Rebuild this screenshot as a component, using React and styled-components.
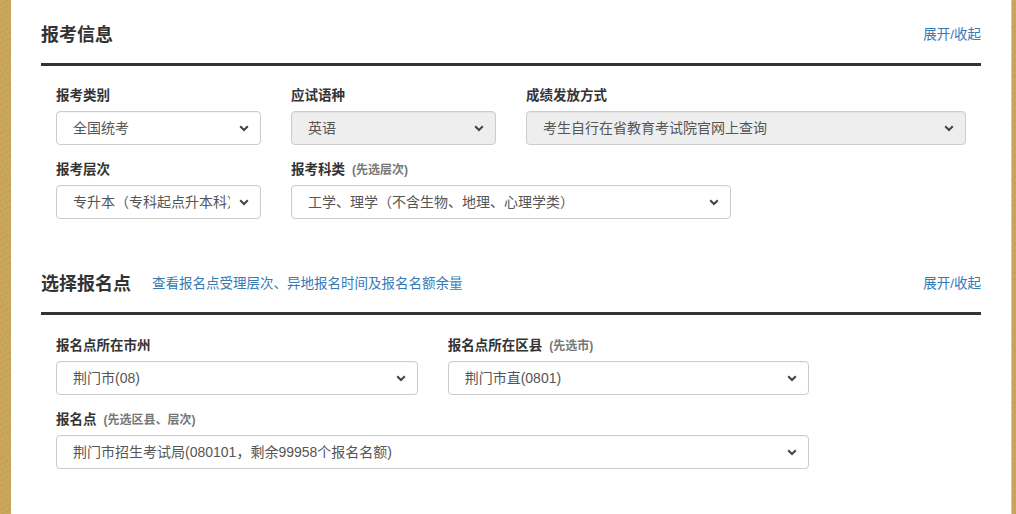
import React from "react";
import styled, { createGlobalStyle } from "styled-components";

const GlobalStyle = createGlobalStyle`
  html, body {
    margin: 0;
    padding: 0;
    height: 100%;
  }
  body {
    background-color: #c9a459;
    background-image:
      repeating-linear-gradient(63deg, rgba(255,255,255,0.06) 0 1px, transparent 1px 4px),
      repeating-linear-gradient(-27deg, rgba(120,80,20,0.08) 0 1px, transparent 1px 5px);
    font-family: "Liberation Sans", "Noto Sans CJK SC", sans-serif;
    color: #333;
  }
`;

const Panel = styled.div`
  margin-left: 11px;
  width: 1001px;
  min-height: 514px;
  box-sizing: border-box;
  background: #fff;
  border-right: 1px solid #c8c8c8;
  padding: 0 30px;
`;

const Section = styled.section``;

const Header = styled.div`
  display: flex;
  align-items: center;
  padding: 23px 0 16px;
  border-bottom: 3px solid #333;
`;

const Title = styled.h2`
  margin: 0;
  font-size: 18px;
  line-height: 24px;
  font-weight: bold;
  color: #333;
`;

const HeaderLink = styled.a`
  font-size: 13.5px;
  line-height: 24px;
  color: #337ab7;
  text-decoration: none;
  cursor: pointer;
  margin-left: ${(p) => (p.$right ? "auto" : "21px")};
`;

const Body = styled.div`
  padding: ${(p) => p.$top}px 0 15px;
`;

const Row = styled.div`
  display: grid;
  grid-template-columns: repeat(12, 1fr);
`;

const Field = styled.div`
  grid-column: span ${(p) => p.$span};
  padding: 0 15px;
  margin-bottom: 15px;
  min-width: 0;
`;

const Label = styled.label`
  display: block;
  font-size: 13.5px;
  line-height: 20px;
  font-weight: bold;
  color: #333;
  margin-bottom: 5px;
`;

const Hint = styled.span`
  font-size: 12px;
  font-weight: bold;
  color: #777;
  margin-left: 7px;
`;

const SelectWrap = styled.div`
  position: relative;
  width: 100%;
`;

const Select = styled.select`
  display: block;
  width: 100%;
  height: 34px;
  box-sizing: border-box;
  appearance: none;
  -webkit-appearance: none;
  border: 1px solid #ccc;
  border-radius: 4px;
  background: ${(p) => (p.disabled ? "#eee" : "#fff")};
  color: #555;
  font-family: "Liberation Sans", "Noto Sans CJK SC", sans-serif;
  font-size: 14px;
  padding: 0 30px 0 16px;
  box-shadow: inset 0 1px 1px rgba(0, 0, 0, 0.04);
  opacity: 1;
`;

const Chevron = styled.svg`
  position: absolute;
  right: 12px;
  top: 50%;
  margin-top: -3px;
  width: 10px;
  height: 7px;
  pointer-events: none;
`;

const Dropdown = ({ value, disabled }) => (
  <SelectWrap>
    <Select disabled={disabled} defaultValue={value}>
      <option value={value}>{value}</option>
    </Select>
    <Chevron viewBox="0 0 10 7">
      <path d="M1.2 1.2 L5 5 L8.8 1.2" fill="none" stroke="#444" strokeWidth="2" />
    </Chevron>
  </SelectWrap>
);

const FormField = ({ span, label, hint, value, disabled }) => (
  <Field $span={span}>
    <Label>
      {label}
      {hint && <Hint>({hint})</Hint>}
    </Label>
    <Dropdown value={value} disabled={disabled} />
  </Field>
);

export default function App() {
  return (
    <>
      <GlobalStyle />
      <Panel>
        <Section>
          <Header>
            <Title>报考信息</Title>
            <HeaderLink $right>展开/收起</HeaderLink>
          </Header>
          <Body $top={20}>
            <Row>
              <FormField span={3} label="报考类别" value="全国统考" />
              <FormField span={3} label="应试语种" value="英语" disabled />
              <FormField span={6} label="成绩发放方式" value="考生自行在省教育考试院官网上查询" disabled />
              <FormField span={3} label="报考层次" value="专升本（专科起点升本科）" />
              <FormField span={6} label="报考科类" hint="先选层次" value="工学、理学（不含生物、地理、心理学类）" />
            </Row>
          </Body>
        </Section>
        <Section>
          <Header>
            <Title>选择报名点</Title>
            <HeaderLink>查看报名点受理层次、异地报名时间及报名名额余量</HeaderLink>
            <HeaderLink $right>展开/收起</HeaderLink>
          </Header>
          <Body $top={21}>
            <Row>
              <FormField span={5} label="报名点所在市州" value="荆门市(08)" />
              <FormField span={5} label="报名点所在区县" hint="先选市" value="荆门市直(0801)" />
              <FormField span={10} label="报名点" hint="先选区县、层次" value="荆门市招生考试局(080101，剩余99958个报名名额)" />
            </Row>
          </Body>
        </Section>
      </Panel>
    </>
  );
}
